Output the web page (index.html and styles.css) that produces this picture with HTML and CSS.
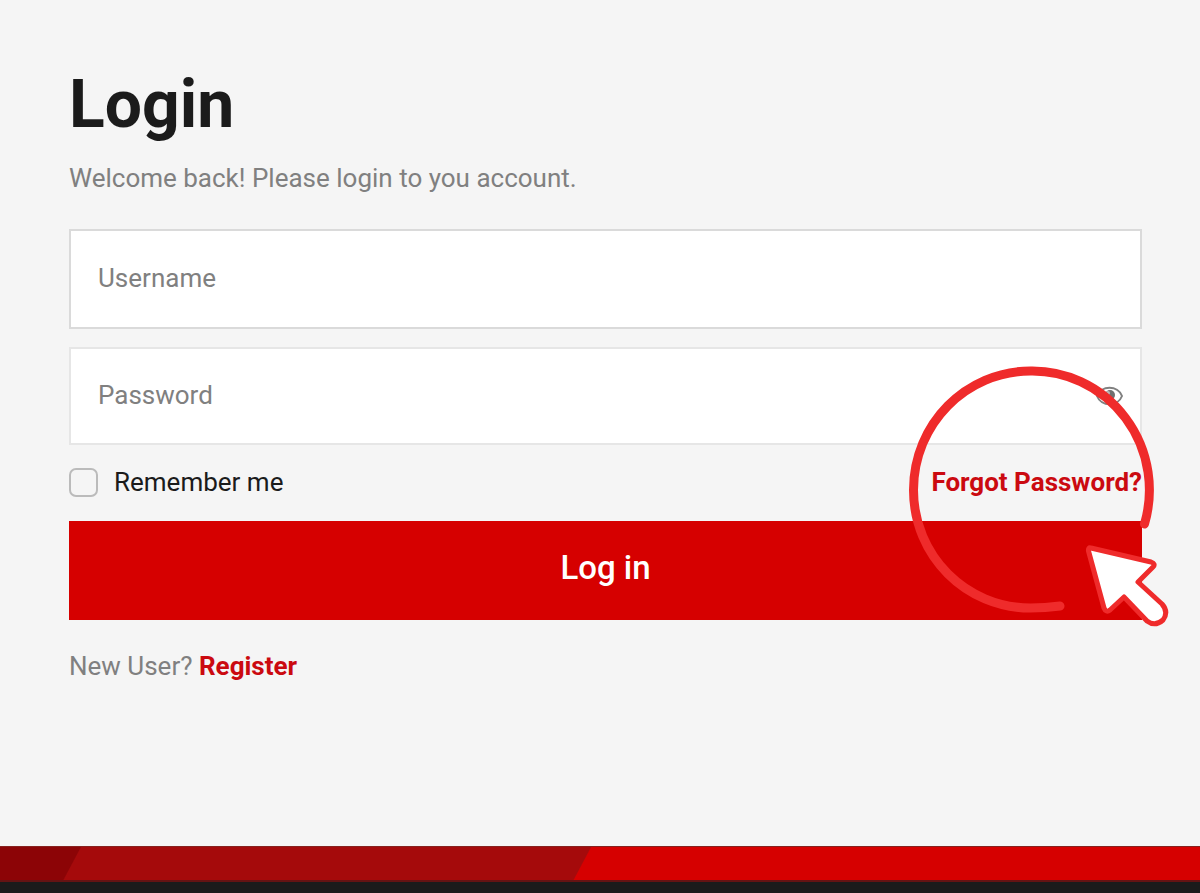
FILE: index.html
```html
<!DOCTYPE html>
<html lang="en">
<head>
<meta charset="utf-8">
<meta name="viewport" content="width=device-width, initial-scale=1">
<title>Login</title>
<link rel="stylesheet" href="styles.css">
</head>
<body>
<main class="login">
  <h1 class="title">Login</h1>
  <p class="intro">Welcome back! Please login to you account.</p>
  <form class="form">
    <input class="field" type="text" placeholder="Username" aria-label="Username">
    <div class="password">
      <input class="field field-light" type="password" placeholder="Password" aria-label="Password">
      <button class="reveal" type="button" aria-label="Show password">
        <svg class="eye" viewBox="0 0 28 20" aria-hidden="true">
          <path d="M1 10C5 -1 22 -1 26 10C22 21 5 21 1 10Z" fill="none" stroke="#808080" stroke-width="2"/>
          <circle cx="14" cy="9" r="5" fill="#707070"/>
          <circle cx="12" cy="7" r="2" fill="#bbb"/>
        </svg>
      </button>
    </div>
    <div class="options">
      <label class="remember"><input class="check" type="checkbox">Remember me</label>
      <a class="link" href="#">Forgot Password?</a>
    </div>
    <button class="submit" type="submit">Log in</button>
    <svg class="highlight" viewBox="0 0 280 270" aria-hidden="true">
      <path d="M244.500 164A117 119 0 0 0 130.500 11C66 11 13.500 64 13.500 130C13.500 196 66 248 130.500 248Q145 248 160 246" fill="none" stroke="#ef2b2b" stroke-width="9" stroke-linecap="round"/>
      <path d="M191 188L251 202Q256 204 253 207L238 222L262 244Q269 252 263 260Q255 267 247 261L224 237L210 250Q206 253 204 248L188.500 191Q188 187 191 188Z" fill="#fff" stroke="#ef2b2b" stroke-width="5" stroke-linejoin="round"/>
    </svg>
  </form>
  <p class="signup">New User? <a class="link" href="#">Register</a></p>
</main>
<footer class="footer"><div class="stripe"></div></footer>
</body>
</html>
```
FILE: styles.css
```css
* { box-sizing: border-box; }
body {
  margin: 0;
  min-height: 100vh;
  display: flex;
  flex-direction: column;
  background: #f5f5f5;
  color: #1b1b1b;
  font: 26px/32px Roboto, "Liberation Sans", sans-serif;
}
.login { flex: 1; padding: 65px 58px 0 69px; }
.title { margin: 0; font-size: 66px; line-height: 80px; font-weight: 700; }
.intro { margin: 17px 0 35px; color: #808080; }
.form { position: relative; display: flex; flex-direction: column; }
.field {
  display: block;
  width: 100%;
  height: 100px;
  padding: 0 27px 2px;
  border: 2px solid #dadada;
  border-radius: 0;
  background: #fff;
  color: #1b1b1b;
  font: inherit;
  outline: 0;
}
.field::placeholder { color: #808080; opacity: 1; }
.field-light { height: 98px; border-color: #e6e6e6; }
.password { position: relative; margin-top: 18px; }
.reveal {
  position: absolute;
  top: 39px;
  right: 18px;
  padding: 0;
  border: 0;
  background: none;
  cursor: pointer;
}
.eye { display: block; width: 28px; height: 20px; }
.options { display: flex; justify-content: space-between; align-items: center; height: 76px; padding-bottom: 2px; }
.remember { display: flex; align-items: center; gap: 16px; }
.check {
  appearance: none;
  width: 29px;
  height: 29px;
  margin: 0;
  border: 2px solid #bbb;
  border-radius: 7px;
  background: #f5f5f5;
}
.check:checked { background: #d60000; }
.link { color: #cb0a10; font-weight: 700; text-decoration: none; }
.submit {
  height: 99px;
  padding: 0 0 6px;
  border: 0;
  background: #d60000;
  color: #fff;
  font: 500 33px/40px Roboto, "Liberation Sans", sans-serif;
  cursor: pointer;
}
.highlight {
  position: absolute;
  top: 131px;
  right: -38px;
  width: 280px;
  height: 270px;
  pointer-events: none;
}
.signup { margin: 30px 0; color: #808080; }
.footer { height: 47px; background: #1b1b1b; }
.stripe {
  height: 36px;
  border-top: 1px solid #85221f;
  border-bottom: 2px solid #651313;
  background: linear-gradient(118deg, #8c0406 6.6%, #a50a0b 6.7%, #a50a0b 48.500%, #d60000 48.600%);
}
```
